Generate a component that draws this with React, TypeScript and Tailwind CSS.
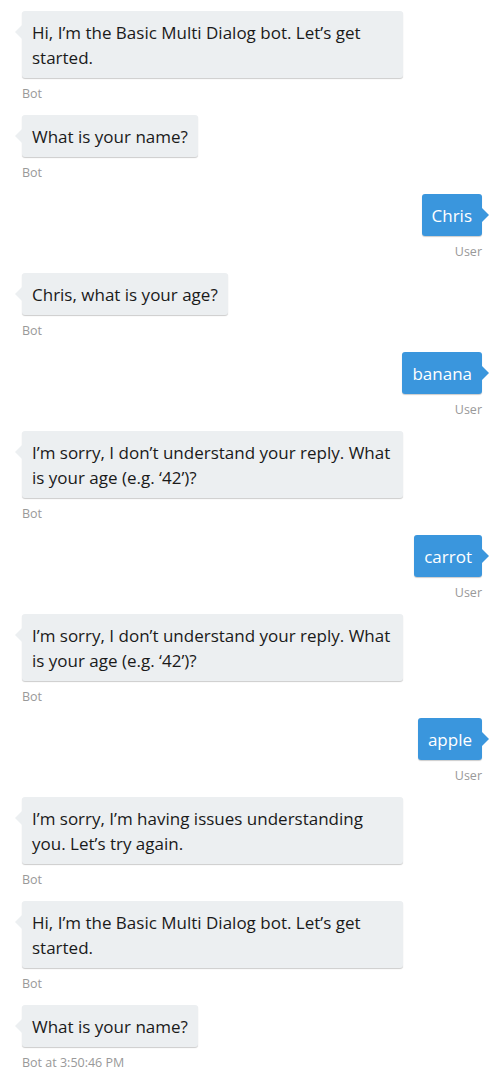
import React from "react";

type Msg = { from: "bot" | "user"; lines: string[]; label?: string };

const messages: Msg[] = [
  { from: "bot", lines: ["Hi, I’m the Basic Multi Dialog bot. Let’s get", "started."] },
  { from: "bot", lines: ["What is your name?"] },
  { from: "user", lines: ["Chris"] },
  { from: "bot", lines: ["Chris, what is your age?"] },
  { from: "user", lines: ["banana"] },
  { from: "bot", lines: ["I’m sorry, I don’t understand your reply. What", "is your age (e.g. ‘42’)?"] },
  { from: "user", lines: ["carrot"] },
  { from: "bot", lines: ["I’m sorry, I don’t understand your reply. What", "is your age (e.g. ‘42’)?"] },
  { from: "user", lines: ["apple"] },
  { from: "bot", lines: ["I’m sorry, I’m having issues understanding", "you. Let’s try again."] },
  { from: "bot", lines: ["Hi, I’m the Basic Multi Dialog bot. Let’s get", "started."] },
  { from: "bot", lines: ["What is your name?"], label: "Bot at 3:50:46 PM" },
];

const Bubble: React.FC<{ msg: Msg }> = ({ msg }) => {
  const isUser = msg.from === "user";
  const wide = msg.lines.length > 1;
  return (
    <div className={isUser ? "flex flex-col items-end pr-[18px]" : "flex flex-col items-start pl-[22px]"}>
      <div
        className={
          "relative rounded-[3px] px-[10px] pt-[9px] pb-[8px] text-[17px] leading-[25px] shadow-[0_1px_1px_rgba(0,0,0,0.2)] " +
          (isUser ? "bg-[#3a96dd] text-white" : "bg-[#eceff1] text-[#1a1a1a]") +
          (wide ? " w-[381px]" : "")
        }
      >
        {isUser ? (
          <span className="absolute right-[-7px] top-[14px] h-0 w-0 border-y-[7px] border-l-[7px] border-y-transparent border-l-[#3a96dd]" />
        ) : (
          <span className="absolute left-[-7px] top-[14px] h-0 w-0 border-y-[7px] border-r-[7px] border-y-transparent border-r-[#eceff1]" />
        )}
        {msg.lines.map((l, i) => (
          <div key={i} className="whitespace-nowrap">
            {l}
          </div>
        ))}
      </div>
      <div className="mt-[9px] mb-[14px] text-[12.5px] leading-[14px] text-[#999999]">
        {msg.label ?? (isUser ? "User" : "Bot")}
      </div>
    </div>
  );
};

export default function App() {
  return (
    <div
      className="w-[500px] bg-white pt-[11px]"
      style={{ fontFamily: '"Segoe UI", "Open Sans", "Noto Sans", sans-serif' }}
    >
      {messages.map((m, i) => (
        <Bubble key={i} msg={m} />
      ))}
    </div>
  );
}
